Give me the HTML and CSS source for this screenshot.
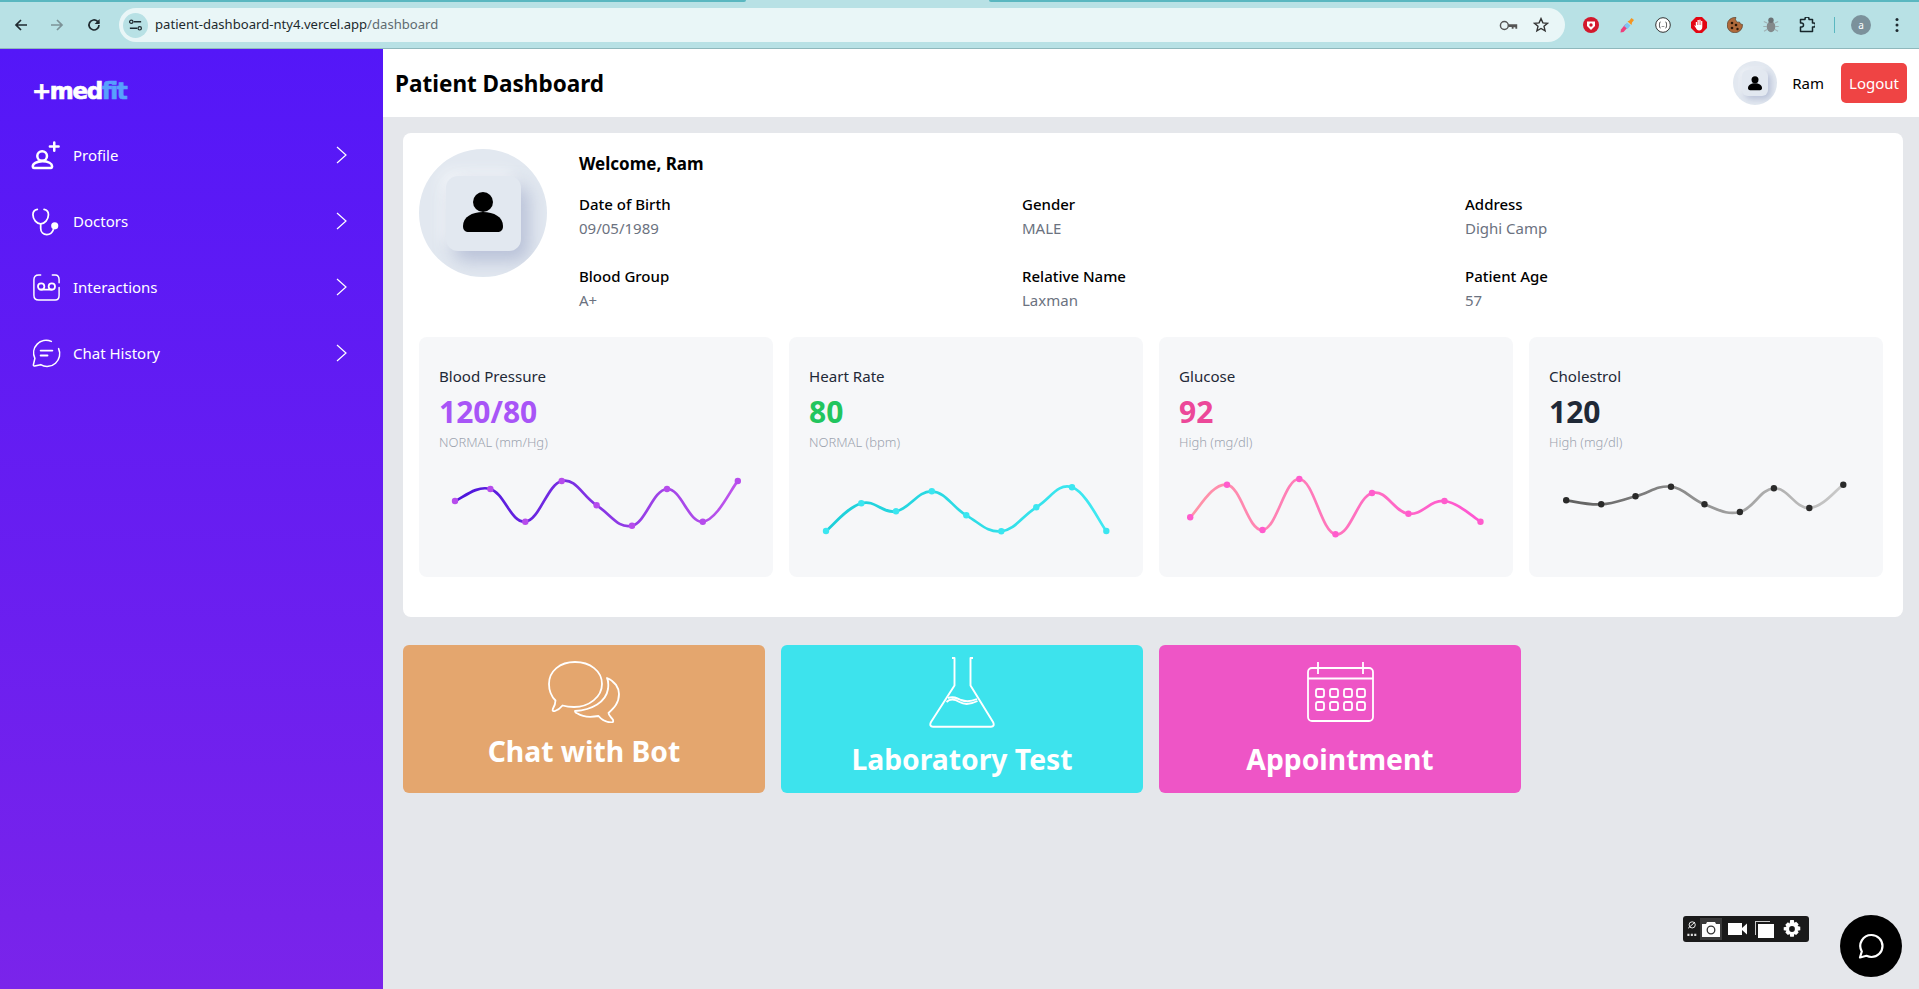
FILE: index.html
```html
<!DOCTYPE html>
<html lang="en">
<head>
<meta charset="utf-8">
<title>Patient Dashboard</title>
<link rel="stylesheet" href="styles.css">
</head>
<body>
<div class="browser">
  <div class="tabstrip"><span class="tabstrip-left"></span><span class="tabstrip-right"></span></div>
  <div class="toolbar">
    <div class="nav-icons">
      <svg class="nav-icon" viewBox="0 0 16 16"><path d="M14 8H3M8 3 3 8l5 5" fill="none" stroke="#1f2a30" stroke-width="1.7"/></svg>
      <svg class="nav-icon" viewBox="0 0 16 16"><path d="M2 8h11M8 3l5 5-5 5" fill="none" stroke="#7c9297" stroke-width="1.7"/></svg>
      <svg class="nav-icon" viewBox="0 0 16 16"><path d="M13 8a5 5 0 1 1-1.500-3.600L13 6" fill="none" stroke="#1f2a30" stroke-width="1.7"/><path d="M13.600 2v5h-5z" fill="#1f2a30"/></svg>
    </div>
    <div class="omnibox">
      <span class="site-chip"><svg viewBox="0 0 16 16" class="chip-icon"><path d="M6 4h8M2 11h8" stroke="#1f2a30" stroke-width="1.500"/><circle cx="3.500" cy="4" r="1.800" fill="none" stroke="#1f2a30" stroke-width="1.300"/><circle cx="12.500" cy="11" r="1.800" fill="none" stroke="#1f2a30" stroke-width="1.300"/></svg></span>
      <span class="url">patient-dashboard-nty4.vercel.app<span class="url-path">/dashboard</span></span>
      <svg class="omni-icon key" viewBox="0 0 20 12"><circle cx="5.500" cy="6" r="4.300" fill="none" stroke="#555" stroke-width="1.600"/><path d="M10 4.500h9.500v5h-2V8h-2v1.500h-2V7.500H10z" fill="#555"/></svg>
      <svg class="omni-icon star" viewBox="0 0 16 16"><path d="m8 1.600 1.900 4.300 4.600.4-3.500 3 1.100 4.600L8 11.500l-4.100 2.400L5 9.300l-3.500-3 4.600-.4z" fill="none" stroke="#333" stroke-width="1.400"/></svg>
    </div>
    <div class="extensions">
      <svg class="ext" viewBox="0 0 16 16"><circle cx="8" cy="8" r="8" fill="#d3182c"/><path d="M4 4.500h8v4.500L8 13 4 9z" fill="#fff"/><circle cx="8" cy="8" r="1.700" fill="#d3182c"/></svg>
      <svg class="ext" viewBox="0 0 16 16"><path d="M1.500 15.500 2 12.500 6.500 7l3 2.500-5 5.500z" fill="#ef3e7c"/><path d="M5 9 8 5.500l3.500 3L8.500 12z" fill="#7fc5f2"/><path d="m8.500 4.500 2-1L12.500 1l2.500 2-2 2.500-.5 2.500z" fill="#f5951f"/></svg>
      <svg class="ext" viewBox="0 0 16 16"><circle cx="8" cy="8" r="7.300" fill="#fff" stroke="#333"/><path d="M5.500 5C4 5 5 8 4 8c1 0 0 3 1.500 3M10.500 5C12 5 11 8 12 8c-1 0 0 3-1.500 3" fill="none" stroke="#333"/><path d="M6.800 9.500h.7M8.500 9.500h.7" stroke="#333"/></svg>
      <svg class="ext" viewBox="0 0 16 16"><path d="M5 0h6l5 5v6l-5 5H5l-5-5V5z" fill="#e30613"/><path d="M4.800 9V5h1.200v3h.5V3h1.300v5h.5V2.800h1.300V8h.5V4h1.200v6c0 2-1.200 3.500-3.200 3.500-1.700 0-2.500-1-3.200-2.500L3.100 8.300l1 .1z" fill="#fff"/></svg>
      <svg class="ext" viewBox="0 0 16 16"><path d="M9 .5a7.700 7.700 0 1 0 6.500 7 3 3 0 0 1-3-2.500 3 3 0 0 1-3.500-4.500z" fill="#b06a3b" stroke="#4a2c17" stroke-width=".6"/><circle cx="5" cy="6" r="1.300" fill="#2a1608"/><circle cx="9" cy="8" r="1.300" fill="#2a1608"/><circle cx="5" cy="11" r="1.300" fill="#2a1608"/><circle cx="10.500" cy="12" r="1.200" fill="#2a1608"/></svg>
      <svg class="ext" viewBox="0 0 16 16"><ellipse cx="8" cy="9.700" rx="4.300" ry="5.500" fill="#83898b"/><circle cx="8" cy="3.200" r="2.700" fill="#6a7174"/><path d="M4 6 .8 4.500M4 9.500H.3M4 12.500l-3 1.800M12 6l3.200-1.500M12 9.500h3.700M12 12.500l3 1.800" stroke="#9fb0b3" stroke-width="1.100"/></svg>
      <svg class="ext" viewBox="0 0 16 16"><path d="M1.500 2.500H6V2a2 2 0 0 1 4 0v.5h3.500V6h1a2 2 0 0 1 0 4h-1v4.500H1.500V10h1a2 2 0 0 0 0-4h-1z" fill="none" stroke="#17262b" stroke-width="1.500" stroke-linejoin="round"/></svg>
      <span class="ext-divider"></span>
      <span class="profile-chip">a</span>
      <svg class="menu-dots" viewBox="0 0 4 16"><circle cx="2" cy="2.500" r="1.500"/><circle cx="2" cy="8" r="1.500"/><circle cx="2" cy="13.500" r="1.500"/></svg>
    </div>
  </div>
</div>

<div class="app">
  <aside class="sidebar">
    <div class="logo">+med<span class="logo-accent">fit</span></div>
    <nav class="menu">
      <a class="menu-item">
        <svg class="menu-icon" viewBox="0 0 32 32" fill="none" stroke="#fff" stroke-width="2.600" stroke-linecap="round" stroke-linejoin="round"><circle cx="11.500" cy="16.500" r="5"/><path d="M2 28c-.5-2 .6-3.500 2.500-4.500 2.200-1.200 4.700-1.700 7.300-1.700s5.100.5 7.300 1.700c1.900 1 3 2.500 2.500 4.500-.2.800-.7 1-1.500 1H3.500c-.8 0-1.300-.2-1.500-1z"/><path d="M24 2.500V11M19.500 6.700h9"/></svg>
        <span class="menu-label">Profile</span>
        <svg class="chevron" viewBox="0 0 11 18"><path d="m1 1 9 8-9 8" fill="none" stroke="#fff" stroke-width="1.200"/></svg>
      </a>
      <a class="menu-item">
        <svg class="menu-icon" viewBox="0 0 32 32" fill="none" stroke="#fff" stroke-width="1.800" stroke-linecap="round"><path d="M6.500 3.500C3.500 4 2 6 2 9c0 5 4 9.500 8 9.500S18 14 18 9c0-3-1.500-5-4.500-5.500"/><path d="M10 18.500V23c0 4 2.800 6.500 6.300 6.500s5.700-2 6.700-5"/><circle cx="24.500" cy="20.500" r="2.800" fill="#fff"/></svg>
        <span class="menu-label">Doctors</span>
        <svg class="chevron" viewBox="0 0 11 18"><path d="m1 1 9 8-9 8" fill="none" stroke="#fff" stroke-width="1.200"/></svg>
      </a>
      <a class="menu-item">
        <svg class="menu-icon" viewBox="0 0 32 32" fill="none" stroke="#fff" stroke-width="1.500" stroke-linecap="round"><path d="M10 3H8C5 3 3 5 3 8v16c0 3 2 5 5 5h17c3 0 4-2 4-5v-8M22 3h3c2.500 0 4 2 4 5v3"/><circle cx="10.500" cy="15" r="3.300" stroke-width="1.800"/><circle cx="21.500" cy="15" r="3.300" stroke-width="1.800"/><path d="M10.500 18.300h11" stroke-width="1.800"/></svg>
        <span class="menu-label">Interactions</span>
        <svg class="chevron" viewBox="0 0 11 18"><path d="m1 1 9 8-9 8" fill="none" stroke="#fff" stroke-width="1.200"/></svg>
      </a>
      <a class="menu-item">
        <svg class="menu-icon" viewBox="0 0 32 32" fill="none" stroke="#fff" stroke-width="1.600" stroke-linecap="round" stroke-linejoin="round"><path d="M21 3.500A13 13 0 0 0 4 21l-1.500 6.500c-.2 1 .3 1.500 1.300 1.300L10 27.500A13 13 0 0 0 28.500 11"/><path d="M10 13h12M10 18h7" stroke-width="2"/></svg>
        <span class="menu-label">Chat History</span>
        <svg class="chevron" viewBox="0 0 11 18"><path d="m1 1 9 8-9 8" fill="none" stroke="#fff" stroke-width="1.200"/></svg>
      </a>
    </nav>
  </aside>

  <div class="main">
    <header class="topbar">
      <h1 class="page-title">Patient Dashboard</h1>
      <div class="user">
        <div class="avatar avatar-small"><div class="avatar-tile"><svg class="person" viewBox="0 0 40 42"><circle cx="20" cy="10" r="10"/><path d="M0 34c0-9 9-14 20-14s20 5 20 14c0 4-2 6-6 6H6c-4 0-6-2-6-6z"/></svg></div></div>
        <span class="user-name">Ram</span>
        <button class="logout">Logout</button>
      </div>
    </header>

    <div class="content">
      <section class="panel">
        <div class="patient">
          <div class="avatar avatar-large"><div class="avatar-tile"><svg class="person" viewBox="0 0 40 42"><circle cx="20" cy="10" r="10"/><path d="M0 34c0-9 9-14 20-14s20 5 20 14c0 4-2 6-6 6H6c-4 0-6-2-6-6z"/></svg></div></div>
          <div class="details">
            <h2 class="welcome">Welcome, Ram</h2>
            <div class="fields">
              <div class="field"><div class="field-label">Date of Birth</div><div class="field-value">09/05/1989</div></div>
              <div class="field"><div class="field-label">Gender</div><div class="field-value">MALE</div></div>
              <div class="field"><div class="field-label">Address</div><div class="field-value">Dighi Camp</div></div>
              <div class="field"><div class="field-label">Blood Group</div><div class="field-value">A+</div></div>
              <div class="field"><div class="field-label">Relative Name</div><div class="field-value">Laxman</div></div>
              <div class="field"><div class="field-label">Patient Age</div><div class="field-value">57</div></div>
            </div>
          </div>
        </div>
        <div class="metrics">
          <div class="metric">
            <div class="metric-title">Blood Pressure</div>
            <div class="metric-value value-purple">120/80</div>
            <div class="metric-note">NORMAL (mm/Hg)</div>
            <svg class="spark" data-from="#4a14dc" data-to="#bf55ec" data-dot="#b64cec" data-points="16,36 51.400,24 86.300,56.700 122.700,16 157.600,40.300 193,60.700 228,24 263.800,56.700 298.800,16"></svg>
          </div>
          <div class="metric">
            <div class="metric-title">Heart Rate</div>
            <div class="metric-value value-green">80</div>
            <div class="metric-note">NORMAL (bpm)</div>
            <svg class="spark" data-from="#1ccfd9" data-to="#3fe9f2" data-dot="#3be6f0" data-points="17,66 52.300,38.300 87,46.300 122.800,26.300 157.300,50.300 192.300,66.300 227.300,42.300 263,22.300 297.300,66"></svg>
          </div>
          <div class="metric">
            <div class="metric-title">Glucose</div>
            <div class="metric-value value-pink">92</div>
            <div class="metric-note">High (mg/dl)</div>
            <svg class="spark" data-from="#ff94a8" data-to="#ff55d2" data-dot="#ff5ccd" data-points="11.200,52.300 48,19.700 83.500,65 120.300,14 156.500,69.300 193,28 229.400,48.700 265.500,36 301.500,56.700"></svg>
          </div>
          <div class="metric">
            <div class="metric-title">Cholestrol</div>
            <div class="metric-value value-dark">120</div>
            <div class="metric-note">High (mg/dl)</div>
            <svg class="spark" data-from="#5f5f5f" data-to="#cacaca" data-dot="#2a2a2a" data-points="17.200,35.300 52.200,39.300 86.500,31.300 122,21.700 155.500,39.300 190.900,47 224.900,23.300 260.300,43 294.300,19.700"></svg>
          </div>
        </div>
      </section>

      <section class="actions">
        <a class="action action-chat">
          <svg class="action-icon icon-chat" viewBox="0 0 72 62" fill="none" stroke="#fff" stroke-width="1.800" stroke-linejoin="round"><path d="M27 1C12 1 1 10 1 23c0 8 3 13 6.500 16.500C7.500 43 6 46 4.800 48c-.8 2 .7 2.500 2.200 2 3-1 5.500-3 7.500-5.500 3.500 1 7.500 1.500 11.500 1.500 15 0 28-10 28-23C54 10 42 1 27 1z"/><path d="M59 17c1.500 3 1.500 7 1 11-2 13-16 21-33 22 0 1 1 2 2.500 2.500 4.500 3 12.500 4 21 2.500 2.500 3 6.500 6 12.500 6.500 2.500 0 2.500-1.500 1.800-3-1.800-2.500-4.300-4.500-4.300-6.500 5.500-5 10.500-10 10.500-19 0-6-4-13-12-16z"/></svg>
          <span class="action-title title-chat">Chat with Bot</span>
        </a>
        <a class="action action-lab">
          <svg class="action-icon icon-lab" viewBox="0 0 66 71" fill="none" stroke="#fff" stroke-width="1.900" stroke-linejoin="round"><path d="M23 1h2.500v27.500L2 65c-1.500 3-.5 4.700 2 4.700h58c2.500 0 3.500-1.700 2-4.700L41.500 28.500V1H44"/><path d="M19 41c5-2 9 0 13 2 5 2 9 2 16-1M17.500 45c3-3 8-3 13 0 5 3 10 3 18-1"/></svg>
          <span class="action-title title-lab">Laboratory Test</span>
        </a>
        <a class="action action-appointment">
          <svg class="action-icon icon-cal" viewBox="0 0 67 60" fill="none" stroke="#fff" stroke-width="1.800"><rect x="1" y="6" width="65" height="53" rx="4"/><path d="M1 16.500h65M11 0v12M56 0v12"/><rect x="9" y="27" width="8" height="8" rx="2"/><rect x="23" y="27" width="8" height="8" rx="2"/><rect x="37" y="27" width="8" height="8" rx="2"/><rect x="50" y="27" width="8" height="8" rx="2"/><rect x="9" y="40" width="8" height="8" rx="2"/><rect x="23" y="40" width="8" height="8" rx="2"/><rect x="37" y="40" width="8" height="8" rx="2"/><rect x="50" y="40" width="8" height="8" rx="2"/></svg>
          <span class="action-title title-cal">Appointment</span>
        </a>
      </section>
    </div>
  </div>
</div>

<div class="capture-bar">
  <svg class="cap-link" viewBox="0 0 16 26"><circle cx="9" cy="7" r="4.500" fill="none" stroke="#fff" stroke-width="1.300"/><path d="M3 12 13 3" stroke="#fff" stroke-width="1.300"/><path d="M2 20h3v3H2zM7 20h3v3H7zM12 20h3v3h-3z" fill="#ddd"/></svg>
  <span class="cap-active"><svg class="cap-icon" viewBox="0 0 20 18"><path d="M1 4h4l1-2h8l1 2h4v13H1z" fill="#fff"/><circle cx="10" cy="10" r="3.800" fill="none" stroke="#333" stroke-width="1.300"/></svg></span>
  <svg class="cap-icon" viewBox="0 0 20 18"><rect x="0" y="3" width="14" height="12" fill="#fff"/><path d="M14 8 19 3.500v11L14 10z" fill="#fff"/></svg>
  <svg class="cap-icon" viewBox="0 0 20 18"><path d="M1 1h15v1H2v13H1z" fill="#ccc"/><rect x="4" y="4" width="16" height="14" fill="#fff"/></svg>
  <svg class="cap-icon cap-gear" viewBox="0 0 20 20"><path d="M8 0h4l.6 3 2-1 2.800 2.800-1.200 2 3 .6v4l-3 .6 1.200 2-2.800 2.800-2-1.200-.6 3H8l-.6-3-2 1.200-2.800-2.800 1.200-2-3-.6V8l3-.6-1.200-2L5.400 2.600l2 1.200z" fill="#fff"/><circle cx="10" cy="10" r="3.200" fill="#1a1a1a"/></svg>
</div>
<button class="chat-fab"><svg class="fab-icon" viewBox="0 0 26 26" fill="none" stroke="#fff" stroke-width="2.200" stroke-linejoin="round"><path d="M13.500 2A11 11 0 0 1 13.500 24c-2 0-3.500-.5-5-1.200L2 24.500l1.800-6A11 11 0 0 1 13.500 2z"/></svg></button>
<script src="charts.js"></script>
</body>
</html>
```

FILE: styles.css
```css
* { box-sizing: border-box; }
html, body { margin: 0; padding: 0; height: 100%; overflow: hidden; }
body { font-family: "Noto Sans", "Open Sans", sans-serif; background: #e5e7eb; color: #000; display: flex; flex-direction: column; }

.browser { flex: none; height: 49px; background: #b8e1e5; border-bottom: 1px solid #8fb8bc; display: flex; flex-direction: column; }
.tabstrip { height: 2px; flex: none; display: flex; justify-content: space-between; background: #b8e1e5; }
.tabstrip-left { width: 746px; background: #5ab7c0; border-radius: 0 0 3px 0; }
.tabstrip-right { width: 930px; background: #5ab7c0; border-radius: 0 0 0 3px; }
.toolbar { flex: 1; display: flex; align-items: center; }
.nav-icons { width: 119px; padding-left: 13px; display: flex; gap: 20.400px; flex: none; }
.nav-icon { width: 16px; height: 16px; }
.omnibox { width: 1446px; height: 34px; border-radius: 17px; background: #e9f6f7; display: flex; align-items: center; padding-left: 4px; flex: none; }
.site-chip { width: 25px; height: 25px; border-radius: 50%; background: #b8e1e5; display: flex; align-items: center; justify-content: center; flex: none; }
.chip-icon { width: 15px; height: 15px; }
.url { margin-left: 7px; flex: 1; font: 13.100px/1 "Noto Sans", sans-serif; color: #1d2a2e; }
.url-path { color: #5e6b70; }
.omni-icon { flex: none; }
.key { width: 19px; height: 11px; margin-right: 15px; }
.star { width: 16px; height: 16px; margin-right: 16px; }
.extensions { flex: 1; display: flex; align-items: center; padding-left: 18px; }
.ext { width: 16px; height: 16px; margin-right: 20px; flex: none; }
.ext-divider { width: 1px; height: 16px; background: #5ab7c0; margin-right: 16px; margin-left: -1px; }
.profile-chip { width: 20px; height: 20px; border-radius: 50%; background: #7b919b; color: #fff; font: 10px/20px "Noto Sans", sans-serif; text-align: center; margin-right: 24px; flex: none; }
.menu-dots { width: 4px; height: 16px; fill: #1f2a30; flex: none; }

.app { flex: 1; display: flex; min-height: 0; }
.sidebar { width: 383px; flex: none; background: linear-gradient(180deg, #5417f8 0%, #7a24ea 100%); color: #fff; }
.logo { height: 68px; padding: 29px 0 0 32px; font: 800 23px/26px "DejaVu Sans", sans-serif; letter-spacing: -1.400px; -webkit-text-stroke: .7px currentColor; }
.logo-accent { color: #58a0fd; }
.menu { display: flex; flex-direction: column; margin-top: 5px; }
.menu-item { height: 66px; display: flex; align-items: center; padding-left: 31px; }
.menu-icon { width: 31px; height: 31px; flex: none; }
.menu-label { margin-left: 11px; flex: 1; font-size: 15px; }
.chevron { width: 11px; height: 18px; margin-right: 36px; flex: none; }

.main { flex: 1; min-width: 0; display: flex; flex-direction: column; }
.topbar { height: 68px; flex: none; background: #fff; display: flex; align-items: center; justify-content: space-between; padding: 0 12px; }
.page-title { margin: 2px 0 0; font-size: 22.500px; line-height: 32px; font-weight: 700; }
.user { display: flex; align-items: center; }
.avatar { border-radius: 50%; background: #e2e8f0; display: flex; align-items: center; justify-content: center; flex: none; overflow: hidden; }
.avatar-tile { background: #e2e8f0; border-radius: 12px; display: flex; align-items: center; justify-content: center; box-shadow: 8px 10px 18px rgba(150,160,195,.55), -6px -6px 14px rgba(255,255,255,.5); }
.person { fill: #000; display: block; }
.avatar-small { width: 44px; height: 44px; }
.avatar-small .avatar-tile { width: 26px; height: 26px; border-radius: 6px; box-shadow: 3px 3px 6px rgba(150,160,195,.55), -2px -2px 5px rgba(255,255,255,.5); }
.avatar-small .person { width: 14px; height: 15px; }
.avatar-large { width: 128px; height: 128px; }
.avatar-large .avatar-tile { width: 75px; height: 75px; }
.avatar-large .person { width: 40px; height: 42px; }
.user-name { margin-left: 15px; font-size: 15px; }
.logout { margin-left: 17px; width: 66px; height: 40px; border: 0; border-radius: 5px; background: #ef4444; color: #fff; font: 15px "Noto Sans", sans-serif; padding: 0; }

.content { flex: 1; padding: 16px 16px 16px 20px; display: flex; flex-direction: column; gap: 28px; }
.panel { background: #fff; border-radius: 8px; height: 484px; padding: 16px; }
.patient { display: flex; height: 188px; }
.details { margin-left: 32px; flex: 1; }
.welcome { margin: 3px 0 0; font-size: 17px; line-height: 24px; font-weight: 700; height: 40px; }
.fields { display: grid; grid-template-columns: repeat(3, 443px); row-gap: 24px; }
.field { height: 48px; }
.field-label { font-size: 15px; line-height: 24px; font-weight: 500; }
.field-value { font-size: 15px; line-height: 24px; color: #6b7280; }
.metrics { display: grid; grid-template-columns: repeat(4, 354px); column-gap: 16px; }
.metric { height: 240px; background: #f6f7f9; border-radius: 8px; padding: 27px 20px 0; }
.metric-title { font-size: 15.100px; line-height: 24px; color: #1f2937; }
.metric-value { font-size: 30px; line-height: 36px; font-weight: 700; margin-top: 6px; }
.value-purple { color: #a855f7; }
.value-green { color: #22c55e; }
.value-pink { color: #ec4899; }
.value-dark { color: #1f2937; }
.metric-note { font-size: 13px; line-height: 20px; font-weight: 300; color: #9ca3af; margin-top: 2px; }
.spark { display: block; width: 314px; height: 90px; margin-top: 13px; overflow: visible; }

.actions { display: grid; grid-template-columns: repeat(3, 362px); column-gap: 16px; }
.action { height: 148px; border-radius: 6px; color: #fff; display: flex; flex-direction: column; align-items: center; }
.action-chat { background: #e4a66e; }
.action-lab { background: #3de3ed; }
.action-appointment { background: #ee55c6; }
.action-icon { display: block; flex: none; }
.icon-chat { width: 72px; height: 62px; margin-top: 16px; }
.icon-lab { width: 66px; height: 71px; margin-top: 12px; }
.icon-cal { width: 67px; height: 60px; margin-top: 17px; }
.action-title { font-size: 28.300px; line-height: 36px; font-weight: 700; }
.title-chat { margin-top: 10px; }
.title-lab { margin-top: 12.500px; }
.title-cal { margin-top: 19px; }

.capture-bar { position: absolute; left: 1683px; top: 916px; width: 126px; height: 26px; background: #1a1a1a; border-radius: 3px; display: flex; align-items: center; padding: 0 3px; gap: 6px; }
.cap-link { width: 11px; height: 20px; flex: none; }
.cap-active { width: 22px; height: 22px; background: #3a3a3a; display: flex; align-items: center; justify-content: center; margin-left: -3px; flex: none; }
.cap-icon { width: 20px; height: 18px; flex: none; }
.cap-gear { margin-left: 2px; }
.chat-fab { position: absolute; left: 1840px; top: 915px; width: 62px; height: 62px; border: 0; padding: 0; border-radius: 50%; background: #000; display: flex; align-items: center; justify-content: center; }
.fab-icon { width: 26px; height: 26px; }
```

FILE: charts.js
```js
document.querySelectorAll('.spark').forEach(function (svg, index) {
  var ns = 'http://www.w3.org/2000/svg';
  var pts = svg.dataset.points.trim().split(/\s+/).map(function (p) { return p.split(',').map(Number); });
  var defs = document.createElementNS(ns, 'defs');
  var grad = document.createElementNS(ns, 'linearGradient');
  grad.id = 'spark-grad-' + index;
  grad.setAttribute('gradientUnits', 'userSpaceOnUse');
  grad.setAttribute('x1', pts[0][0]); grad.setAttribute('x2', pts[pts.length - 1][0]);
  grad.setAttribute('y1', 0); grad.setAttribute('y2', 0);
  [[0, svg.dataset.from], [1, svg.dataset.to]].forEach(function (s) {
    var stop = document.createElementNS(ns, 'stop');
    stop.setAttribute('offset', s[0]); stop.setAttribute('stop-color', s[1]);
    grad.appendChild(stop);
  });
  defs.appendChild(grad); svg.appendChild(defs);
  var d = 'M' + pts[0][0] + ' ' + pts[0][1];
  for (var i = 0; i < pts.length - 1; i++) {
    var p0 = pts[Math.max(i - 1, 0)], p1 = pts[i], p2 = pts[i + 1], p3 = pts[Math.min(i + 2, pts.length - 1)];
    var k = 1 / 5;
    d += ' C' + (p1[0] + (p2[0] - p0[0]) * k) + ' ' + (p1[1] + (p2[1] - p0[1]) * k) + ' ' +
      (p2[0] - (p3[0] - p1[0]) * k) + ' ' + (p2[1] - (p3[1] - p1[1]) * k) + ' ' + p2[0] + ' ' + p2[1];
  }
  var path = document.createElementNS(ns, 'path');
  path.setAttribute('d', d); path.setAttribute('fill', 'none');
  path.setAttribute('stroke', 'url(#spark-grad-' + index + ')'); path.setAttribute('stroke-width', '2.700');
  svg.appendChild(path);
  pts.forEach(function (p) {
    var c = document.createElementNS(ns, 'circle');
    c.setAttribute('cx', p[0]); c.setAttribute('cy', p[1]); c.setAttribute('r', '3.200');
    c.setAttribute('fill', svg.dataset.dot);
    svg.appendChild(c);
  });
});
```
